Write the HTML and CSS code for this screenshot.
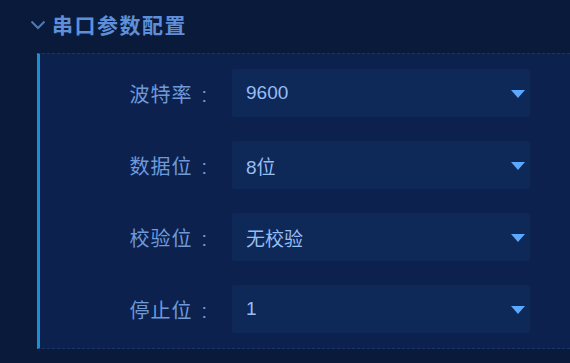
FILE: index.html
```html
<!DOCTYPE html>
<html lang="zh-CN">
<head>
  <meta charset="UTF-8">
  <title>串口参数配置</title>
  <link rel="stylesheet" href="styles.css">
</head>
<body>
  <div class="section">
    <div class="section-title">
      <svg class="chevron" width="16" height="10" viewBox="0 0 16 10">
        <path d="M1.5 1.5 L8 8 L14.5 1.5" fill="none" stroke="#4f78b8" stroke-width="2"/>
      </svg>
      <span>串口参数配置</span>
    </div>

    <div class="panel">
      <div class="row">
        <label>波特率<span class="colon">:</span></label>
        <div class="select"><span>9600</span><i class="caret"></i></div>
      </div>
      <div class="row">
        <label>数据位<span class="colon">:</span></label>
        <div class="select"><span>8位</span><i class="caret"></i></div>
      </div>
      <div class="row">
        <label>校验位<span class="colon">:</span></label>
        <div class="select"><span>无校验</span><i class="caret"></i></div>
      </div>
      <div class="row">
        <label>停止位<span class="colon">:</span></label>
        <div class="select"><span>1</span><i class="caret"></i></div>
      </div>
    </div>
  </div>
</body>
</html>
```

FILE: styles.css
```css
body {
  margin: 0;
  background: #0a1a3b;
  font-family: "Liberation Sans", "Noto Sans CJK SC", sans-serif;
  color: #6f9be0;
  overflow: hidden;
}

.section-title {
  display: flex;
  align-items: center;
  height: 53px;
  padding-left: 30px;
  box-sizing: border-box;
  padding-bottom: 5px;
}

.chevron {
  margin-right: 6px;
  margin-top: 1px;
}

.section-title span {
  font-size: 21px;
  font-weight: bold;
  letter-spacing: 1.5px;
  color: #5e8fd8;
}

.panel {
  margin-left: 37px;
  background: #0d214f;
  border-left: 3px solid #1a8fd6;
  border-top: 1px dashed #1c3566;
  border-bottom: 1px dashed #1c3566;
  padding: 15px 0 15px;
  display: flex;
  flex-direction: column;
  gap: 24px;
}

.row {
  display: flex;
  align-items: center;
  height: 48px;
}

.row label {
  width: 168px;
  margin-right: 24px;
  text-align: right;
  font-size: 20px;
  letter-spacing: 1px;
  color: #6e9ada;
}

.colon {
  margin-left: 9px;
}

.select {
  width: 298px;
  height: 48px;
  background: #0e2858;
  display: flex;
  align-items: center;
  justify-content: space-between;
  padding: 0 5px 0 14px;
  box-sizing: border-box;
  border-radius: 2px;
}

.select span {
  font-size: 19px;
  color: #97bdf2;
}

.caret {
  width: 0;
  height: 0;
  border-left: 7px solid transparent;
  border-right: 7px solid transparent;
  border-top: 8px solid #5aa8ff;
  margin-top: 1px;
}
```
